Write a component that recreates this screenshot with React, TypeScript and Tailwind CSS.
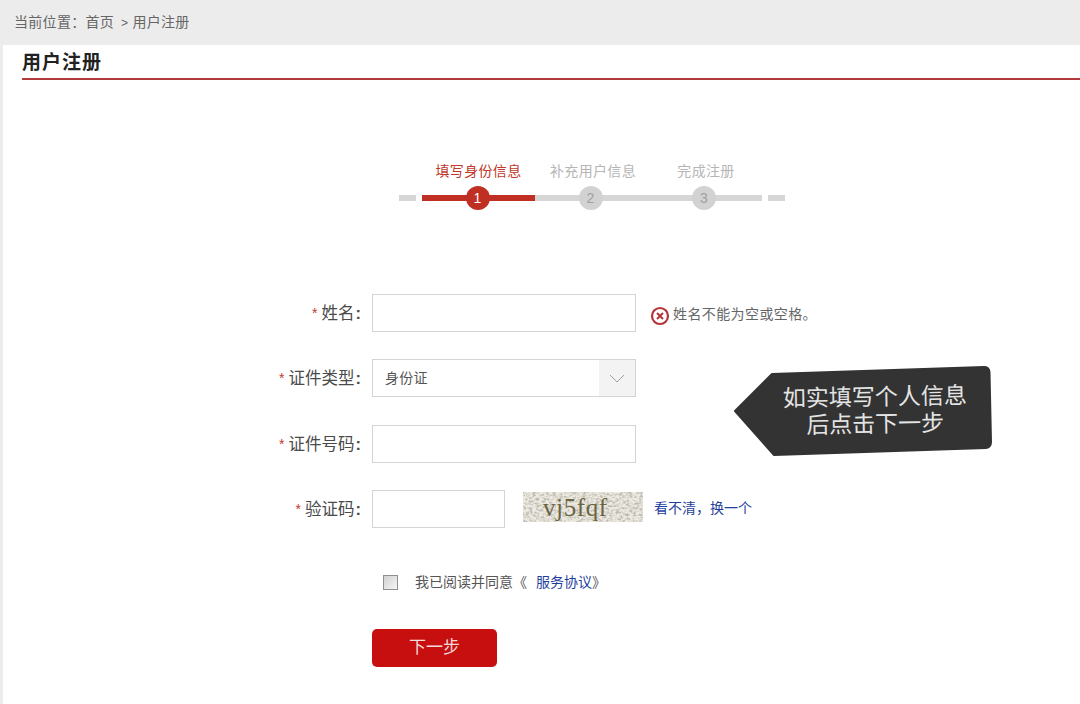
const cjk = { fontFamily: '"Liberation Sans", "Noto Sans CJK SC", sans-serif' };

const steps = [
  { n: 1, label: "填写身份信息", active: true, shift: "ml-0", width: "w-[113px]" },
  { n: 2, label: "补充用户信息", active: false, shift: "ml-[3px]", width: "w-[113px]" },
  { n: 3, label: "完成注册", active: false, shift: "ml-[2px]", width: "w-[114px]" },
];

function Stepper() {
  return (
    <div className="mt-[81px] ml-[396px] flex items-end">
      <div className="mb-[9px] mr-[6px] h-[6px] w-[17px] bg-[#d6d6d6]" />
      {steps.map((s) => (
        <div key={s.n} className={`flex ${s.width} flex-col items-center`}>
          <div className={`whitespace-nowrap text-[14px] leading-[20px] tracking-[0.35px] ${s.shift} ${s.active ? "text-[#c0392b]" : "text-[#b5b5b5]"}`}>
            {s.label}
          </div>
          <div className="relative mt-[5px] flex h-[24px] w-full items-center justify-center">
            <div className={`absolute inset-x-0 top-[9px] h-[6px] ${s.active ? "bg-[#bf2f23]" : "bg-[#d6d6d6]"}`} />
            <div className={`relative mr-[2px] flex h-[24px] w-[24px] items-center justify-center rounded-full text-[14px] ${s.active ? "bg-[#bf2f23] text-white" : "bg-[#d2d2d2] text-[#a0a0a0]"}`}>
              {s.n}
            </div>
          </div>
        </div>
      ))}
      <div className="mb-[9px] ml-[6px] h-[6px] w-[17px] bg-[#d6d6d6]" />
    </div>
  );
}

function Label({ text }: { text: string }) {
  return (
    <div className="flex w-[369px] shrink-0 items-center justify-end whitespace-nowrap pr-[11px] text-[16.5px] text-[#4a4a4a]">
      <span className="mr-[4px] text-[14px] text-[#c0392b]">*</span>
      {text}
      <span className="ml-[1px] font-bold">:</span>
    </div>
  );
}

function Captcha() {
  return (
    <div className="relative ml-[18px] mb-[4px] h-[30px] w-[120px] overflow-hidden bg-[#dcd8cf]">
      <svg width="120" height="30" className="absolute inset-0">
        <filter id="paper">
          <feTurbulence type="fractalNoise" baseFrequency="0.3 0.45" numOctaves="3" seed="4" />
          <feColorMatrix values="0 0 0 0 0.5  0 0 0 0 0.48  0 0 0 0 0.43  3 0 0 0 -1.25" />
        </filter>
        <rect width="120" height="30" fill="#ece9e1" />
        <rect width="120" height="30" filter="url(#paper)" />
      </svg>
      <div
        className="relative pl-[20px] text-[25px] leading-[32px] tracking-[0.6px] text-[#6a6440]"
        style={{ fontFamily: '"Liberation Serif", serif' }}
      >
        vj5fqf
      </div>
    </div>
  );
}

export default function App() {
  return (
    <div className="h-[704px] w-[1080px] overflow-hidden bg-[#ececec]" style={cjk}>
      <div className="flex h-[45px] items-center pl-[14px] text-[14px] tracking-[0.3px] text-[#666]">
        当前位置：首页<span className="ml-[7px] mr-[4px] text-[12px]">&gt;</span>用户注册
      </div>
      <div className="relative ml-[3px] h-[659px] overflow-hidden bg-white">
        <div className="ml-[19px] border-b-2 border-[#b23a3a] pb-[2px] pt-[4px] text-[19px] font-bold leading-[27px] tracking-[1px] text-[#222]">
          用户注册
        </div>

        <Stepper />

        <div className="mt-[84px] flex h-[38px] items-center">
          <Label text="姓名" />
          <div className="h-[38px] w-[264px] border border-[#d4d4d4] bg-white" />
          <svg width="20" height="20" viewBox="0 0 20 20" className="ml-[14px] mt-[5px]">
            <circle cx="10" cy="10" r="8" fill="none" stroke="#b5343a" strokeWidth="2.2" />
            <path d="M7 7l6 6M13 7l-6 6" stroke="#b5343a" strokeWidth="2" />
          </svg>
          <span className="ml-[3px] mt-[2px] text-[14px] tracking-[0.4px] text-[#666]">姓名不能为空或空格。</span>
        </div>

        <div className="mt-[27px] flex h-[38px] items-center">
          <Label text="证件类型" />
          <div className="flex h-[38px] w-[264px] items-stretch border border-[#d4d4d4] bg-white">
            <div className="flex flex-1 items-center pl-[12px] text-[14px] tracking-[0.3px] text-[#555]">身份证</div>
            <div className="flex w-[36px] items-center justify-center bg-[#f3f3f3]">
              <svg width="18" height="11" viewBox="0 0 18 11">
                <path d="M2 2l7 7 7-7" fill="none" stroke="#a0a0a0" strokeWidth="1" />
              </svg>
            </div>
          </div>
        </div>

        <div className="mt-[28px] flex h-[38px] items-center">
          <Label text="证件号码" />
          <div className="h-[38px] w-[264px] border border-[#d4d4d4] bg-white" />
        </div>

        <div className="mt-[27px] flex h-[38px] items-center">
          <Label text="验证码" />
          <div className="h-[38px] w-[133px] border border-[#d4d4d4] bg-white" />
          <Captcha />
          <span className="ml-[11px] mb-[2px] text-[14px] text-[#1f3f9e]">看不清，换一个</span>
        </div>

        <div className="mt-[43px] flex h-[22px] items-center pl-[380px] text-[14px] text-[#555]">
          <div className="h-[15px] w-[15px] border border-[#8f8f8f] bg-gradient-to-br from-[#d0d0d0] to-[#f6f6f6]" />
          <span className="ml-[17px]">我已阅读并同意《</span>
          <span className="ml-[9px] text-[#1f3f9e]">服务协议</span>
          <span>》</span>
        </div>

        <div className="ml-[369px] mt-[36px] flex h-[38px] w-[125px] items-center justify-center rounded-[5px] bg-[#c70f0f] text-[17px] text-[#f3dada]">
          下一步
        </div>

        {/* hint arrow sits over the form */}
        <div className="absolute left-[729px] top-[319px] h-[94px] w-[262px]">
          <svg width="262" height="94" viewBox="0 0 262 94" className="absolute inset-0">
            <path
              d="M3 47L40 10L252 3Q257 3 257.500 8L259 78Q259 83 254 84L42 91Z"
              fill="#333333"
              stroke="#333333"
              strokeWidth="2"
              strokeLinejoin="round"
            />
          </svg>
          <div className="absolute left-[37px] top-[20px] w-[212px] -rotate-1 text-center text-[23px] leading-[27px] text-[#e4e4e4]">
            如实填写个人信息
            <br />
            后点击下一步
          </div>
        </div>
      </div>
    </div>
  );
}
